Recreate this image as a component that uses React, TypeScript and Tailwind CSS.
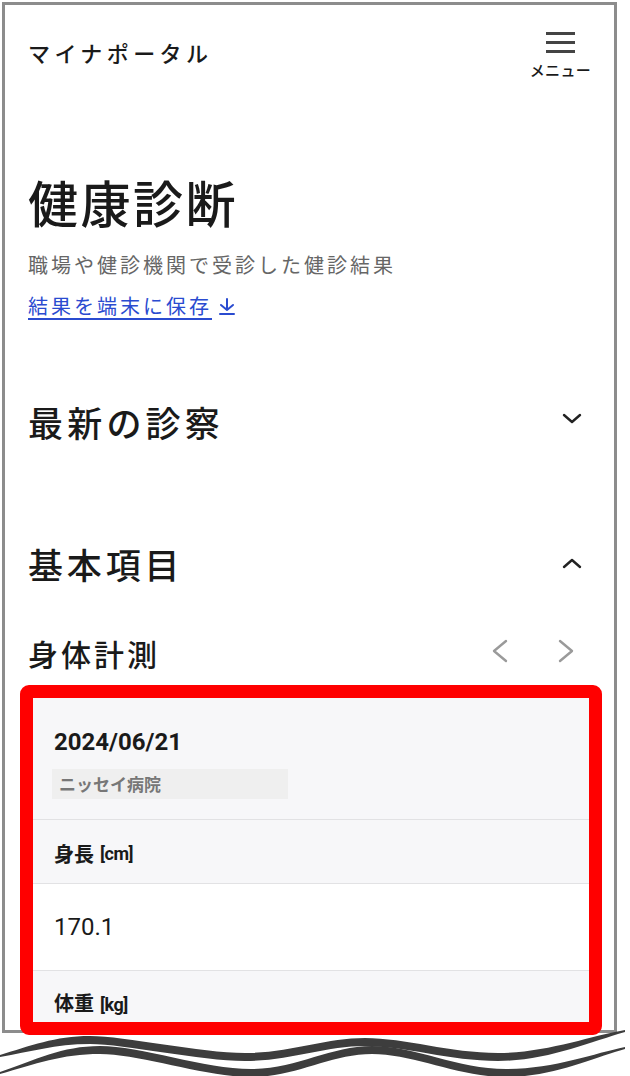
import React from 'react';

const JP = { fontFamily: '"Noto Sans CJK JP", "Noto Sans", sans-serif' };
const NUM = { fontFamily: 'Roboto, "Noto Sans CJK JP", sans-serif' };

const Chevron = ({ dir, className }: { dir: 'up' | 'down' | 'left' | 'right'; className?: string }) => {
  const d = {
    down: 'M2 2 L10 9 L18 2',
    up: 'M2 9 L10 2 L18 9',
    left: 'M15 2 L3 12 L15 22',
    right: 'M3 2 L15 12 L3 22',
  }[dir];
  const box = dir === 'up' || dir === 'down' ? '0 0 20 11' : '0 0 18 24';
  return (
    <svg viewBox={box} className={className} fill="none" stroke="currentColor" strokeWidth="2.4" strokeLinecap="round" strokeLinejoin="round">
      <path d={d} />
    </svg>
  );
};

// torn-off edge below the screenshot
const Waves = () => (
  <svg className="absolute left-0 top-[1020px] z-10" width="630" height="56" viewBox="0 0 630 56">
    <path
      fill="#3d3d3d"
      d="M0 35 C30 26, 55 16, 90 16 C125 16, 200 33, 245 33 C290 33, 325 18, 365 18 C405 18, 450 33, 498 33 C546 33, 590 16, 625 10 L625 12 C590 22, 546 41, 498 41 C450 41, 405 26, 365 26 C325 26, 290 41, 245 41 C200 41, 125 24, 90 24 C55 24, 30 32, 0 37 Z"
    />
    <path
      fill="#3d3d3d"
      d="M0 52 C35 40, 62 26, 100 26 C140 26, 205 49, 251 49 C297 49, 330 26, 372 26 C414 26, 458 49, 506 49 C554 49, 595 33, 625 27 L625 29 C595 37, 554 57, 506 57 C458 57, 414 34, 372 34 C330 34, 297 57, 251 57 C205 57, 140 34, 100 34 C62 34, 35 44, 0 54 Z"
    />
  </svg>
);

export default function App() {
  return (
    <div className="relative w-[630px] h-[1076px] bg-white overflow-hidden text-[#1a1a1a]" style={JP}>
      <div className="ml-[2px] mt-[2px] w-[615px] h-[1031px] border-[3px] border-[#8c8c8c]">
        {/* header */}
        <div className="h-[90px] flex justify-between pl-[23px] pr-[23px]">
          <div className="mt-[32px] text-[22px] leading-[30px] font-medium tracking-[0.2em]">マイナポータル</div>
          <div className="mt-[27px] flex flex-col items-center">
            <div className="flex flex-col gap-[6px]">
              <div className="w-[29px] h-[3px] bg-[#444]" />
              <div className="w-[29px] h-[3px] bg-[#444]" />
              <div className="w-[29px] h-[3px] bg-[#444]" />
            </div>
            <div className="mt-[9px] text-[15px] leading-[16px] font-medium tracking-[0.02em]">メニュー</div>
          </div>
        </div>

        <div className="pl-[23px] pr-[32px]">
          <h1 className="mt-[76px] text-[50px] leading-[60px] font-medium tracking-[0.05em]">健康診断</h1>
          <p className="mt-[20px] text-[20px] leading-[28px] text-[#666] tracking-[0.15em]">職場や健診機関で受診した健診結果</p>
          <div className="mt-[13px] flex items-center text-[20px] leading-[28px] text-[#2a4bd0] tracking-[0.15em]">
            <span className="underline underline-offset-[4px]">結果を端末に保存</span>
            <svg viewBox="0 0 18 20" className="ml-[6px] w-[18px] h-[20px]" fill="none" stroke="currentColor" strokeWidth="2" strokeLinecap="round" strokeLinejoin="round">
              <path d="M9 3 V14 M3 9 L9 14 L15 9 M2 18 H16" />
            </svg>
          </div>

          <div className="mt-[80px] flex items-center justify-between">
            <h2 className="text-[35px] leading-[44px] font-medium tracking-[0.12em]">最新の診察</h2>
            <Chevron dir="down" className="w-[20px] h-[11px] mb-[8px] text-[#222]" />
          </div>

          <div className="mt-[98px] flex items-center justify-between">
            <h2 className="text-[35px] leading-[44px] font-medium tracking-[0.11em]">基本項目</h2>
            <Chevron dir="up" className="w-[20px] h-[11px] mb-[2px] text-[#222]" />
          </div>

          <div className="mt-[49px] flex items-center justify-between">
            <h3 className="text-[30px] leading-[36px] font-medium tracking-[0.1em]">身体計測</h3>
            <div className="flex items-center gap-[48px] mb-[4px] mr-[7px] text-[#9a9a9a]">
              <Chevron dir="left" className="w-[18px] h-[24px]" />
              <Chevron dir="right" className="w-[18px] h-[24px]" />
            </div>
          </div>
        </div>

        {/* highlighted card */}
        <div className="relative z-20 mt-[14px] ml-[15px] w-[582px] h-[350px] border-[13px] border-[#ff0000] rounded-[9px] overflow-hidden bg-white">
          <div className="bg-[#f7f7f9] pl-[19px] pt-[29px] pb-[20px]">
            <div className="ml-[2px] text-[24px] leading-[30px] font-bold" style={NUM}>2024/06/21</div>
            <div className="mt-[12px] w-[236px] h-[30px] bg-[#efefef] px-[7px] flex items-center text-[17px] font-bold text-[#777]">ニッセイ病院</div>
          </div>
          <div className="h-[1px] bg-[#e2e2e4]" />
          <div className="h-[63px] bg-[#f7f7f9] pl-[21px] flex items-center pt-[4px] text-[20px] font-bold">
            身長<span className="ml-[6px] text-[18px] tracking-tight" style={NUM}>[cm]</span>
          </div>
          <div className="h-[1px] bg-[#e2e2e4]" />
          <div className="h-[86px] bg-white pl-[21px] flex items-center text-[24px]" style={NUM}>170.1</div>
          <div className="h-[1px] bg-[#e2e2e4]" />
          <div className="h-[80px] bg-[#f7f7f9] pl-[21px] pt-[18px] text-[20px] leading-[28px] font-bold">
            体重<span className="ml-[6px] text-[18px] tracking-tight" style={NUM}>[kg]</span>
          </div>
        </div>
      </div>
      <Waves />
    </div>
  );
}
